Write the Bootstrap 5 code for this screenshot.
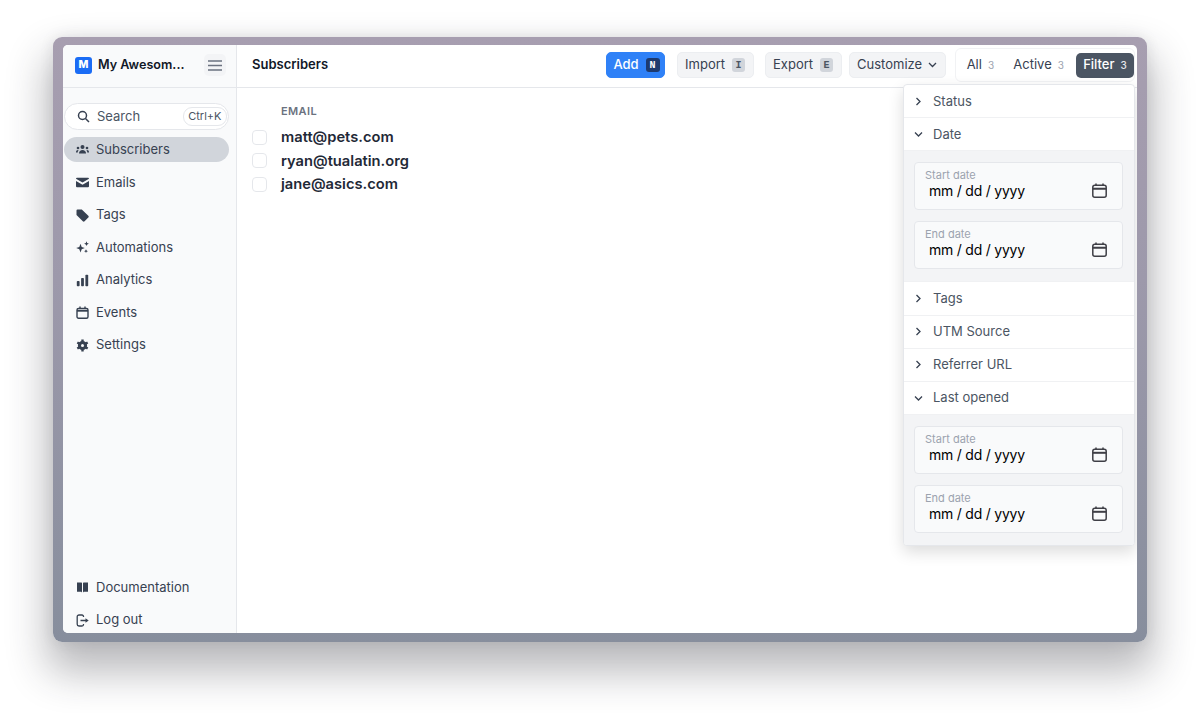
<!doctype html>
<html lang="en"><head><meta charset="utf-8"><title>Subscribers</title>
<link href="https://cdn.jsdelivr.net/npm/bootstrap@5.3.0/dist/css/bootstrap.min.css" rel="stylesheet">
<style>
html,body{height:713px;overflow:hidden;background:#fff}
body{font-family:Inter,"Liberation Sans",sans-serif;font-size:13px;color:#1f2937;padding:37px 53px 71px}
.win{height:605px;border-radius:9px;padding:8px 10px 9px 10px;background:linear-gradient(180deg,#a79eb0 0%,#9d99ab 40%,#878e9d 100%);box-shadow:0 24px 40px 6px rgba(40,40,50,.32),0 0 14px rgba(40,40,50,.1)}
.shell{height:588px;border-radius:5px;overflow:hidden;background:#fff}
.side{width:174px;flex:none;background:#f9fafb;border-right:1px solid #e5e7eb}
.brandrow{height:43px;border-bottom:1px solid #e5e7eb;padding:0 11px 2px 12px}
.logo{width:17px;height:17px;border-radius:3px;background:#1a6cf5;color:#fff;font-size:10.5px;font-weight:800}
.brand{font-size:12.6px;font-weight:600;color:#111827;margin-left:6px}
.burger{width:22px;height:22px;border-radius:5px;background:#f3f4f6;margin-right:-1px}
.searchbox{height:27px;margin:15px 7px 0 1px;background:#fff;border:1px solid #e5e7eb;border-radius:14px;padding:0 1px 0 12px;color:#4b5563}
.searchbox .lbl{margin-left:7px;font-size:13px}
.kbdchip{font-size:11px;border:1px solid #e5e7eb;border-radius:9px;padding:1px 4.500px;height:19px;line-height:15px;color:#4b5563}
.navi{height:25px;margin:7.500px 7px 0 1px;padding-left:12px;border-radius:13px;color:#374151;gap:7px;text-decoration:none;font-size:13px}
.navi.on{background:#d1d5db;margin-top:7px}
.navi.on + .navi{margin-top:8px}
.navi.low{margin-top:7.500px;margin-bottom:.500px}
.navi svg{flex:none}
.main{min-width:0;position:relative}
.head{height:43px;border-bottom:1px solid #e5e7eb;padding:0 2px 2px 15px}
.ttl{font-size:13px;font-weight:600;color:#111827}
.tools{gap:11px}
.tbtn{height:26px;border-radius:5px;background:#f3f4f6;border:1px solid #eceef1;color:#374151;font-size:13px;padding:0 7.500px;gap:7px}
.tbtn.pri{background:#2f81f7;border-color:#2f81f7;color:#fff;font-weight:500;padding:0 4px 0 6px;gap:7px;margin-right:1px}
.tbtn.cust{margin-left:7px;gap:6px}
.kk{font-family:"Liberation Mono",monospace;font-size:10px;font-weight:700;width:13px;height:14px;border-radius:3px;background:#d1d5db;color:#4b5563;display:flex;align-items:center;justify-content:center}
.pri .kk{background:#1e3a6e;color:#fff;width:14px}
.seg{height:34px;border:1px solid #f1f2f4;border-radius:6px;gap:0;margin-left:9px;background:#fff}
.segi{height:25px;padding:0 7px;gap:6px;border-radius:5px;font-size:13px;color:#374151;margin-left:4px}
.segi.act{margin-left:5px}
.segi.on{background:#4b5563;color:#fff;font-weight:500;margin-left:5px}
.num{font-size:10px;color:#9ca3af;letter-spacing:.2px}
.segi.on .num{color:#e5e7eb}
.colhd{font-size:11px;font-weight:600;letter-spacing:.4px;color:#6b7280;padding-left:44px;padding-top:17px;height:37.500px;line-height:13px}
.line{height:23.500px;padding-left:15px;gap:14px;font-size:14.700px;font-weight:600;color:#1f2937}
.box{width:15px;height:15px;border:1px solid #e5e7eb;border-radius:4px;background:#fff;flex:none}
.pop{position:absolute;left:666px;top:39px;width:232px;background:#fff;border:1px solid #e5e7eb;border-radius:4px;box-shadow:0 6px 16px rgba(0,0,0,.14);overflow:hidden;font-size:13px;color:#4b5563}
.ar{height:33.200px;padding-left:11px;gap:11px;border-bottom:1px solid #f0f1f3}
.ar.first{padding-top:1px}
.ar svg.dn{margin:0 -1px}
.dates{background:#f3f4f6;padding:11px 11px 1px 10px;border-bottom:1px solid #f0f1f3}
.dates.last{border-bottom:0}
.dt{height:48px;background:#f9fafb;border:1px solid #e5e7eb;border-radius:4px;margin-bottom:11px;padding:0 14px 0 10px;position:relative}
.dt small{display:block;font-size:11px;color:#9ca3af;line-height:13px;padding-top:6px}
.dt b{display:block;font-weight:400;font-size:14px;letter-spacing:-.22px;color:#000;margin-left:4px;line-height:18px}
.dt svg{position:absolute;right:15px;top:20px}
</style></head><body>
<div class="win"><div class="shell d-flex">
<aside class="side d-flex flex-column">
 <div class="brandrow d-flex align-items-center">
  <span class="logo d-flex align-items-center justify-content-center">M</span>
  <span class="brand flex-grow-1">My Awesom...</span>
  <span class="burger d-flex align-items-center justify-content-center"><svg width="14" height="11" viewBox="0 0 14 11"><path d="M0 1h14M0 5.500h14M0 10h14" stroke="#6b7280" stroke-width="1.300"/></svg></span>
 </div>
 <div class="searchbox d-flex align-items-center">
  <svg width="13" height="13" viewBox="0 0 13 13" fill="none" stroke="#374151" stroke-width="1.500"><circle cx="5.500" cy="5.500" r="4"/><path d="M8.500 8.500l3.500 3.500"/></svg>
  <span class="lbl flex-grow-1">Search</span><span class="kbdchip">Ctrl+K</span>
 </div>
 <a class="navi on d-flex align-items-center"><svg width="13" height="13" viewBox="0 0 13 13" fill="#374151"><circle cx="6.500" cy="4" r="2"/><path d="M3 10.500c0-2.200 1.500-3.500 3.500-3.500s3.500 1.300 3.500 3.500z"/><circle cx="2" cy="5" r="1.300"/><circle cx="11" cy="5" r="1.300"/><path d="M0 9c0-1.300.8-2 2-2l.6.200C2 8 1.800 8.500 1.700 9.500H0zM13 9c0-1.300-.8-2-2-2l-.6.200c.6.800.8 1.300.9 2.300H13z"/></svg>Subscribers</a>
 <a class="navi d-flex align-items-center"><svg width="13" height="13" viewBox="0 0 13 13" fill="#374151"><path d="M0 2.800a1 1 0 0 1 1-1h11a1 1 0 0 1 1 1L6.500 6.600zM0 5l6.500 3.700L13 5v5.200a1 1 0 0 1-1 1H1a1 1 0 0 1-1-1z"/></svg>Emails</a>
 <a class="navi d-flex align-items-center"><svg width="13" height="13" viewBox="0 0 13 13" fill="#374151"><path d="M.5 1.500a1 1 0 0 1 1-1h4.300l6.500 6.300a1.300 1.300 0 0 1 0 1.800l-3.700 3.700a1.300 1.300 0 0 1-1.800 0L.5 6z"/></svg>Tags</a>
 <a class="navi d-flex align-items-center"><svg width="13" height="13" viewBox="0 0 13 13" fill="#374151"><path d="M4.500 2.800l1.200 3.100 3.100 1.200-3.100 1.200-1.200 3.100-1.200-3.100L.2 7.100l3.100-1.200zM10.500.3l.7 1.700 1.700.7-1.700.7-.7 1.700-.7-1.700-1.700-.7 1.700-.7zM10 8.300l.6 1.300 1.300.6-1.300.6-.6 1.300-.6-1.300-1.300-.6 1.300-.6z"/></svg>Automations</a>
 <a class="navi d-flex align-items-center"><svg width="13" height="13" viewBox="0 0 13 13" fill="#374151"><rect x=".8" y="7" width="2.800" height="5.300" rx=".8"/><rect x="5.100" y="4" width="2.800" height="8.300" rx=".8"/><rect x="9.400" y=".8" width="2.800" height="11.500" rx=".8"/></svg>Analytics</a>
 <a class="navi d-flex align-items-center"><svg width="13" height="13" viewBox="0 0 13 13" fill="none" stroke="#374151" stroke-width="1.400"><rect x="1" y="2.500" width="11" height="9.800" rx="1.500"/><path d="M1 4.800h11" stroke-width="1.800"/><path d="M4 .4v2.500M9 .4v2.500"/></svg>Events</a>
 <a class="navi d-flex align-items-center"><svg width="13" height="13" viewBox="0 0 13 13"><circle cx="6.500" cy="6.500" r="3.300" fill="none" stroke="#374151" stroke-width="2.600"/><path d="M6.500 .5v12M1.300 3.500l10.400 6M1.300 9.500l10.400-6" stroke="#374151" stroke-width="2.400"/><circle cx="6.500" cy="6.500" r="1.500" fill="#f9fafb"/></svg>Settings</a>
 <div class="flex-grow-1"></div>
 <a class="navi d-flex align-items-center"><svg width="13" height="13" viewBox="0 0 13 13" fill="#374151"><path d="M1 1.500h4.500l.5.500v9.500l-.8-.8H1zM12 1.500H7.500L7 2v9.500l.8-.8H12z"/></svg>Documentation</a>
 <a class="navi low d-flex align-items-center"><svg width="13" height="13" viewBox="0 0 13 13" fill="none" stroke="#374151" stroke-width="1.300"><path d="M7.500 3V2.500a1.500 1.500 0 0 0-1.500-1.500H3a1.800 1.800 0 0 0-1.800 1.800v7.400A1.800 1.800 0 0 0 3 12h3a1.500 1.500 0 0 0 1.500-1.500V10M4.500 6.500H10"/><path d="M9.500 4.300l3.200 2.200-3.200 2.200z" fill="#374151" stroke="none"/></svg>Log out</a>
</aside>
<main class="main flex-grow-1">
 <div class="head d-flex align-items-center">
  <span class="ttl me-auto">Subscribers</span>
  <div class="tools d-flex align-items-center">
   <span class="tbtn pri d-flex align-items-center">Add <span class="kk">N</span></span>
   <span class="tbtn d-flex align-items-center">Import <span class="kk">I</span></span>
   <span class="tbtn d-flex align-items-center">Export <span class="kk">E</span></span>
  </div>
  <span class="tbtn cust d-flex align-items-center">Customize <svg width="9" height="6" viewBox="0 0 9 6" fill="none" stroke="#374151" stroke-width="1.300"><path d="M1 1l3.500 3.500L8 1"/></svg></span>
  <div class="seg d-flex align-items-center">
   <span class="segi d-flex align-items-center">All <span class="num">3</span></span>
   <span class="segi act d-flex align-items-center">Active <span class="num">3</span></span>
   <span class="segi on d-flex align-items-center">Filter <span class="num">3</span></span>
  </div>
 </div>
 <div class="colhd">EMAIL</div>
 <div class="line d-flex align-items-center"><span class="box"></span>matt@pets.com</div>
 <div class="line d-flex align-items-center"><span class="box"></span>ryan@tualatin.org</div>
 <div class="line d-flex align-items-center"><span class="box"></span>jane@asics.com</div>
 <div class="pop">
  <div class="ar first d-flex align-items-center"><svg width="7" height="9" viewBox="0 0 7 9" fill="none" stroke="#374151" stroke-width="1.300"><path d="M1.500 1l3.500 3.500L1.500 8"/></svg><span>Status</span></div>
  <div class="ar d-flex align-items-center"><svg class="dn" width="9" height="7" viewBox="0 0 9 7" fill="none" stroke="#374151" stroke-width="1.300"><path d="M1 1.500l3.500 3.500L8 1.500"/></svg><span>Date</span></div>
  <div class="dates">
   <div class="dt"><small>Start date</small><b>mm / dd / yyyy</b><svg width="15" height="15" viewBox="0 0 15 15" fill="none" stroke="#3f3f46" stroke-width="1.500"><rect x=".8" y="2.300" width="13.400" height="11.900" rx="2"/><path d="M.8 5.800h13.400" stroke-width="2"/><path d="M4 .5v2.500M11 .5v2.500"/></svg></div>
   <div class="dt"><small>End date</small><b>mm / dd / yyyy</b><svg width="15" height="15" viewBox="0 0 15 15" fill="none" stroke="#3f3f46" stroke-width="1.500"><rect x=".8" y="2.300" width="13.400" height="11.900" rx="2"/><path d="M.8 5.800h13.400" stroke-width="2"/><path d="M4 .5v2.500M11 .5v2.500"/></svg></div>
  </div>
  <div class="ar d-flex align-items-center"><svg width="7" height="9" viewBox="0 0 7 9" fill="none" stroke="#374151" stroke-width="1.300"><path d="M1.500 1l3.500 3.500L1.500 8"/></svg><span>Tags</span></div>
  <div class="ar d-flex align-items-center"><svg width="7" height="9" viewBox="0 0 7 9" fill="none" stroke="#374151" stroke-width="1.300"><path d="M1.500 1l3.500 3.500L1.500 8"/></svg><span>UTM Source</span></div>
  <div class="ar d-flex align-items-center"><svg width="7" height="9" viewBox="0 0 7 9" fill="none" stroke="#374151" stroke-width="1.300"><path d="M1.500 1l3.500 3.500L1.500 8"/></svg><span>Referrer URL</span></div>
  <div class="ar d-flex align-items-center"><svg class="dn" width="9" height="7" viewBox="0 0 9 7" fill="none" stroke="#374151" stroke-width="1.300"><path d="M1 1.500l3.500 3.500L8 1.500"/></svg><span>Last opened</span></div>
  <div class="dates last">
   <div class="dt"><small>Start date</small><b>mm / dd / yyyy</b><svg width="15" height="15" viewBox="0 0 15 15" fill="none" stroke="#3f3f46" stroke-width="1.500"><rect x=".8" y="2.300" width="13.400" height="11.900" rx="2"/><path d="M.8 5.800h13.400" stroke-width="2"/><path d="M4 .5v2.500M11 .5v2.500"/></svg></div>
   <div class="dt"><small>End date</small><b>mm / dd / yyyy</b><svg width="15" height="15" viewBox="0 0 15 15" fill="none" stroke="#3f3f46" stroke-width="1.500"><rect x=".8" y="2.300" width="13.400" height="11.900" rx="2"/><path d="M.8 5.800h13.400" stroke-width="2"/><path d="M4 .5v2.500M11 .5v2.500"/></svg></div>
  </div>
 </div>
</main>
</div></div>
<script src="https://cdn.jsdelivr.net/npm/bootstrap@5.3.0/dist/js/bootstrap.bundle.min.js"></script>
</body></html>
